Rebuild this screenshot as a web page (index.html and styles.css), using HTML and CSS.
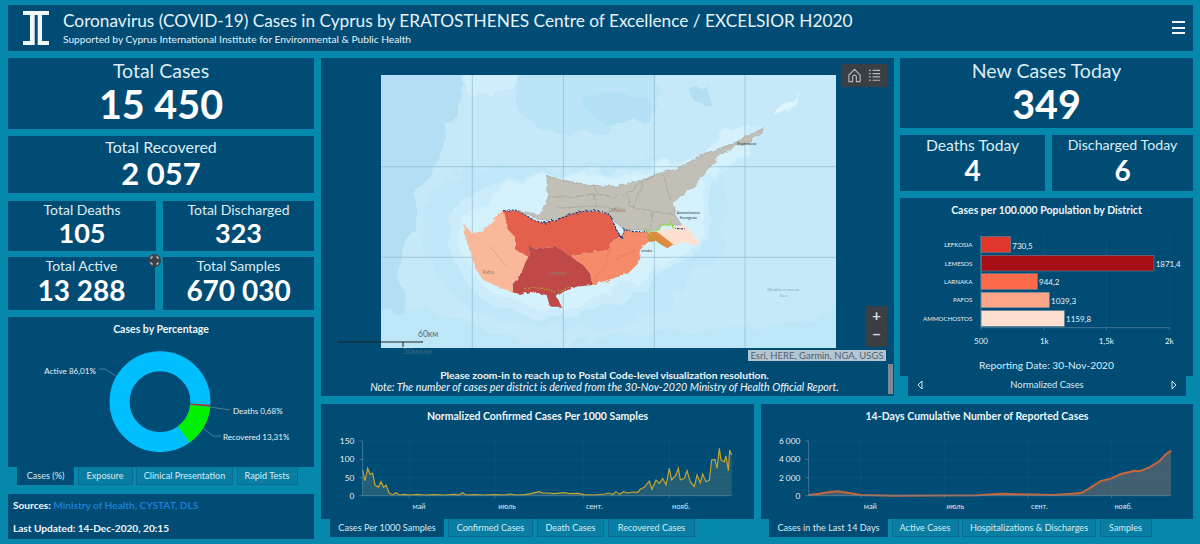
FILE: index.html
```html
<!DOCTYPE html>
<html lang="en">
<head>
<meta charset="utf-8">
<title>COVID-19 Cases in Cyprus</title>
<link rel="stylesheet" href="styles.css">
</head>
<body>
<header class="panel header">
  <svg class="logo" viewBox="0 0 26 34"><path d="M0 0H26V4H0ZM7 4H11.700V34H0V30H7ZM14.700 4H19V30H26V34H14.700Z"/></svg>
  <div class="header-text">
    <h1>Coronavirus (COVID-19) Cases in Cyprus by ERATOSTHENES Centre of Excellence / EXCELSIOR H2020</h1>
    <p>Supported by Cyprus International Institute for Environmental &amp; Public Health</p>
  </div>
  <div class="burger"><i></i><i></i><i></i></div>
</header>
<main class="main">
  <section class="col-left">
    <div class="panel tile tile-total"><span class="lbl lbl-xl">Total Cases</span><b class="num num-xl">15 450</b></div>
    <div class="panel tile tile-rec"><span class="lbl lbl-l">Total Recovered</span><b class="num num-l">2 057</b></div>
    <div class="pair pair-a">
      <div class="panel tile t-a"><span class="lbl lbl-m">Total Deaths</span><b class="num num-m">105</b></div>
      <div class="panel tile t-b"><span class="lbl lbl-m">Total Discharged</span><b class="num num-m">323</b></div>
    </div>
    <div class="pair pair-b">
      <div class="panel tile t-c"><span class="lbl lbl-m">Total Active</span><b class="num num-m2">13 288</b></div>
      <div class="panel tile t-b"><span class="lbl lbl-m">Total Samples</span><b class="num num-m2">670 030</b></div>
      <svg class="expand" viewBox="0 0 13 13"><circle cx="6.500" cy="6.500" r="6.500" fill="#3b4047"/><path d="M3 5V3H5M8 3H10V5M10 8V10H8M5 10H3V8" fill="none" stroke="#d5d8da" stroke-width="1"/></svg>
    </div>
    <div class="panel pie-panel">
      <h2 class="chart-title">Cases by Percentage</h2>
      <svg class="pie" viewBox="0 24 306 126">
        <circle class="ring ring-active" cx="152" cy="84.700" r="40.400"/>
        <circle class="ring ring-rec" cx="152" cy="84.700" r="40.400" pathLength="100" stroke-dasharray="13.310 86.690" transform="rotate(6 152 84.700)"/>
        <circle class="ring ring-death" cx="152" cy="84.700" r="40.400" pathLength="100" stroke-dasharray="0.680 99.320" transform="rotate(3.500 152 84.700)"/>
        <path class="leader" d="M91 52H97L108 59M202 90L222 93M195 111L205 119H213"/>
        <text class="pie-lbl" x="88" y="57" text-anchor="end">Active 86,01%</text>
        <text class="pie-lbl" x="225" y="97">Deaths 0,68%</text>
        <text class="pie-lbl" x="215" y="123">Recovered 13,31%</text>
      </svg>
    </div>
    <nav class="tabs tabs-pie">
      <span class="tab on">Cases (%)</span><span class="tab">Exposure</span><span class="tab">Clinical Presentation</span><span class="tab">Rapid Tests</span>
    </nav>
    <div class="panel sources">
      <p>Sources: <a>Ministry of Health, CYSTAT, DLS</a></p>
      <p>Last Updated: 14-Dec-2020, 20:15</p>
    </div>
  </section>
  <section class="col-rest">
    <div class="top-row">
      <div class="panel map-panel">
        <div class="map-frame">
          <svg class="map" viewBox="3 45 1365 819">
            <defs>
              <filter id="soft" x="-10%" y="-10%" width="120%" height="120%">
                <feTurbulence type="fractalNoise" baseFrequency="0.012" numOctaves="3" seed="7" result="n"/>
                <feDisplacementMap in="SourceGraphic" in2="n" scale="70" result="d"/>
                <feGaussianBlur in="d" stdDeviation="2"/>
              </filter>
              <filter id="rough" x="-5%" y="-5%" width="110%" height="110%">
                <feTurbulence type="fractalNoise" baseFrequency="0.05" numOctaves="4" seed="3" result="n"/>
                <feDisplacementMap in="SourceGraphic" in2="n" scale="13"/>
              </filter>
            </defs>
            <rect x="3" y="45" width="1365" height="819" fill="#c6e9f9"/>
            <g filter="url(#soft)">
              <path fill="#b2dff4" d="M-60 -20H245C260 110 220 210 180 300C120 330 80 420 110 520C50 580 50 650 80 740L-60 900Z"/>
              <path fill="#d0eefb" d="M240 0H430C410 80 340 115 265 105Z"/>
              <path fill="#bbe4f6" d="M410 0H820C860 90 840 170 730 190C640 230 490 220 430 170C390 120 400 80 410 0Z"/>
              <path fill="#b2e0f5" d="M610 110H800C820 150 790 190 720 195C680 200 620 170 610 110Z"/>
              <path fill="#bde6f7" d="M-60 930V770C120 710 240 790 400 840C600 860 900 800 1180 790L1440 740V930Z"/>
              <path fill="#bfe7f8" d="M185 350C280 310 430 310 540 335C700 325 900 265 1010 305C1055 360 1040 480 1010 595C950 650 880 680 860 750C800 815 500 835 335 780C235 750 135 640 135 525C135 430 135 385 185 350Z"/>
              <path fill="#cbecfb" d="M200 450C255 400 380 380 470 345C560 335 700 340 800 325C900 295 1000 245 1080 220C1160 185 1180 205 1120 255C1040 305 1000 355 985 405C975 450 1000 540 975 590C910 610 840 610 815 650C765 710 640 715 585 785C500 805 420 750 335 730C250 695 190 560 200 450Z"/>
              <path fill="#d5f1fc" d="M238 480C290 425 390 395 480 350C560 345 700 350 800 335C900 305 1000 250 1090 220C1130 200 1140 215 1100 255C1030 300 990 345 960 400C950 450 985 530 960 575C900 585 835 590 805 625C760 680 640 690 570 755C500 770 430 715 345 700C275 670 225 560 238 480Z"/>
              <path fill="#e2f5fd" d="M1190 140L1272 110L1232 150L1190 168Z"/>
              <path fill="#b4dff3" d="M930 90L985 78L978 115L940 120Z"/>
            </g>
            <g class="grat"><path d="M277 45V864M550 45V864M823 45V864M1095 45V864M3 320H1368M3 592H1368"/></g>
            <g filter="url(#rough)">
              <path class="land-n" d="M500 345L520 355L600 370L660 378L720 378L790 360L830 342L880 330L930 305L960 285L1010 268L1060 250L1110 225L1152 203L1143 222L1105 245L1060 262L1020 285L990 320L960 350L945 380L905 403L880 430L885 465L906 497L870 492L800 512L730 506L700 482L660 455L600 455L540 475L490 482L440 462L418 452L480 465L505 410Z"/>
              <path class="roads" d="M505 410L580 412L640 402L700 412L745 400L790 365L830 345M640 402L650 440M745 400L750 440L830 455L880 465M820 455L812 505M530 445L640 438L720 445M790 365L760 440M640 375L650 400M850 345L870 420"/>
              <path class="d-pafos" d="M372 455L395 447L405 530L405 570L445 590L435 610L420 650L398 680L395 695L350 680L310 660L285 625L270 570L252 520L250 490L275 520L300 515L335 490L350 462Z"/>
              <path class="d-lef" d="M372 455L395 447L420 455L460 480L490 490L540 475L600 455L660 455L690 465L710 510L725 535L700 540L690 565L640 575L575 590L530 560L490 565L445 560L445 590L405 570L405 530L385 510Z"/>
              <path class="d-lem" d="M445 560L490 565L530 560L575 590L610 615L635 645L637 675L590 680L550 695L530 710L545 740L510 740L500 705L450 695L420 705L395 695L398 680L420 650L435 610L445 590Z"/>
              <path class="d-lar" d="M575 590L640 575L690 565L700 540L725 535L730 505L760 515L800 515L805 545L780 570L775 610L745 640L700 655L637 675L635 645L610 615Z"/>
              <path class="d-amm" d="M825 515L870 505L905 495L920 500L945 530L955 557L900 545L878 555L850 535Z"/>
              <path class="d-strip" d="M800 515L830 515L880 553L862 565L830 545L805 545Z"/>
              <path class="roads-red" d="M690 470L695 540M690 565L680 610L640 665M700 600L770 570M330 560L380 620M470 500L520 540M580 480L600 540"/>
              <path class="green" d="M800 505L812 525M810 515L860 495L872 485L878 505"/>
              <path class="bound-g" d="M435 690L470 680L510 690L530 700L570 680M800 530L860 555"/>
              <path class="bound" d="M372 455L395 447L420 455L460 480L490 490L540 475L600 455L660 452L690 465L710 510L725 535L730 505L760 515L800 515"/>
              <path class="bound" d="M880 505L915 507"/>
            </g>
            <text class="place" x="925" y="463" text-anchor="middle">Ammochostos</text>
            <text class="place" x="925" y="476" text-anchor="middle">Famagusta</text>
            <text class="place" x="1100" y="254" text-anchor="middle">Rizokarpaso</text>
            <text class="place" x="800" y="575" text-anchor="middle">arnaka</text>
            <text class="place dim" x="712" y="455" text-anchor="middle">Lefkosia</text>
            <text class="place dim" x="533" y="645" text-anchor="middle">Lemesos</text>
            <text class="place dim" x="325" y="642" text-anchor="middle">Pafos</text>
            <text class="sea" x="1210" y="693" text-anchor="middle">Mediterranean</text>
            <text class="sea" x="1210" y="712" text-anchor="middle">Sea</text>
          </svg>
        </div>
        <div class="map-tools">
          <svg viewBox="0 0 16 16" class="tool"><path d="M8 1.500L14 7.500V14.500H10V9.500C10 7 6 7 6 9.500V14.500H2V7.500Z"/></svg>
          <svg viewBox="0 0 16 16" class="tool"><path d="M2 2.500H4M6 2.500H14M2 6H4M6 6H14M2 9.500H4M6 9.500H14M2 13H4M6 13H14"/></svg>
        </div>
        <div class="zoom-btns"><span>+</span><span>−</span></div>
        <div class="scale">
          <span class="scale-km">60км</span>
          <svg class="scale-bar" viewBox="0 0 85 7"><path d="M0 1H85V0M65 1V6" fill="none" stroke="#222" stroke-width="1"/></svg>
          <span class="scale-mi">30мили</span>
        </div>
        <div class="attrib">Esri, HERE, Garmin, NGA, USGS</div>
        <div class="caption">
          <p class="cap-b">Please zoom-in to reach up to Postal Code-level visualization resolution.</p>
          <p class="cap-i">Note: The number of cases per district is derived from the 30-Nov-2020 Ministry of Health Official Report.</p>
        </div>
        <div class="scrollbar"></div>
      </div>
      <div class="col-right">
        <div class="panel tile tile-new"><span class="lbl lbl-xl">New Cases Today</span><b class="num num-xl">349</b></div>
        <div class="pair pair-c">
          <div class="panel tile t-d"><span class="lbl lbl-l3">Deaths Today</span><b class="num num-m2">4</b></div>
          <div class="panel tile t-e"><span class="lbl lbl-l2">Discharged Today</span><b class="num num-m2">6</b></div>
        </div>
        <div class="panel bar-panel">
          <h2 class="chart-title">Cases per 100.000 Population by District</h2>
          <svg class="bars" viewBox="0 81 879 390">
            <path class="grid-dot" d="M433 120V398M619 120V398M808 120V398"/>
            <rect x="243" y="125" width="89" height="47" fill="#e0362c" class="bar"/>
            <rect x="243" y="181" width="519" height="47" fill="#a50f15" class="bar"/>
            <rect x="243" y="236" width="169" height="47" fill="#fb6a4a" class="bar"/>
            <rect x="243" y="292" width="205" height="46" fill="#fca588" class="bar"/>
            <rect x="243" y="347" width="250" height="47" fill="#fee0d2" class="bar"/>
            <path class="axis" d="M243 122V405M243 398H808M433 398V405M619 398V405M808 398V405"/>
            <g class="bar-cat">
              <text x="217" y="157" text-anchor="end">LEFKOSIA</text>
              <text x="217" y="212" text-anchor="end">LEMESOS</text>
              <text x="217" y="267" text-anchor="end">LARNAKA</text>
              <text x="217" y="322" text-anchor="end">PAFOS</text>
              <text x="217" y="378" text-anchor="end">AMMOCHOSTOS</text>
            </g>
            <g class="bar-val">
              <text x="337" y="161">730,5</text>
              <text x="767" y="215">1871,4</text>
              <text x="417" y="270">944,2</text>
              <text x="453" y="327">1039,3</text>
              <text x="498" y="382">1159,8</text>
            </g>
            <g class="bar-val">
              <text x="243" y="448" text-anchor="middle">500</text>
              <text x="433" y="448" text-anchor="middle">1k</text>
              <text x="619" y="448" text-anchor="middle">1,5k</text>
              <text x="808" y="448" text-anchor="middle">2k</text>
            </g>
          </svg>
          <div class="report-date">Reporting Date: 30-Nov-2020</div>
        </div>
        <div class="selector">
          <svg class="arrow" viewBox="0 0 6 10"><path d="M5 1L1 5L5 9Z"/></svg>
          <span>Normalized Cases</span>
          <svg class="arrow" viewBox="0 0 6 10"><path d="M1 1L5 5L1 9Z"/></svg>
        </div>
      </div>
    </div>
    <div class="bottom-row">
      <div class="chart-block block-a">
        <div class="panel line-panel">
          <h2 class="chart-title">Normalized Confirmed Cases Per 1000 Samples</h2>
          <svg class="line" viewBox="0 84 1299 273">
            <path class="grid-dot" d="M125 123H1232M125 178H1232M125 233H1232M265 123V287M522 123V287M787 123V287M1045 123V287"/>
            <path class="area-a" d="M125 287V210L132 243L140 205L147 222L155 220L162 255L172 262L180 245L188 262L195 255L205 280L215 284L225 278L235 285L300 284L400 285L425 279L435 285L520 285L570 283L600 285L640 280L655 276L670 279L730 281L760 281L800 285L860 281L880 277L890 283L905 276L930 278L950 275L965 265L985 245L995 268L1005 240L1015 250L1025 235L1035 255L1045 205L1052 240L1065 225L1072 205L1078 240L1090 235L1098 212L1108 245L1120 260L1128 225L1138 248L1145 222L1155 245L1165 240L1172 180L1182 178L1188 205L1195 145L1200 180L1210 185L1215 168L1222 212L1226 150L1232 165V287Z"/>
            <polyline class="line-a" points="125,210 132,243 140,205 147,222 155,220 162,255 172,262 180,245 188,262 195,255 205,280 215,284 225,278 235,285 250,283 270,285 290,283 310,285 340,284 370,285 400,283 415,285 425,278 435,285 460,284 490,285 520,284 550,285 570,282 585,285 610,284 630,281 645,277 655,275 665,279 680,279 700,281 730,278 745,281 770,280 790,284 820,285 850,282 865,279 875,284 885,275 895,283 908,275 920,279 935,276 950,277 958,268 970,262 985,243 993,268 1005,240 1015,250 1025,235 1035,255 1045,205 1052,240 1065,225 1072,205 1078,240 1090,235 1098,212 1108,245 1120,260 1128,225 1138,248 1145,222 1155,245 1165,240 1172,180 1182,178 1188,205 1195,145 1200,180 1210,185 1215,168 1222,212 1226,150 1232,165"/>
            <path class="axis" d="M125 123V287H1232M115 123H125M115 178H125M115 233H125M115 287H125M265 287V294M522 287V294M787 287V294M1045 287V294"/>
            <g class="tick">
              <text x="100" y="132" text-anchor="end">150</text>
              <text x="100" y="187" text-anchor="end">100</text>
              <text x="100" y="242" text-anchor="end">50</text>
              <text x="100" y="296" text-anchor="end">0</text>
            </g>
            <g class="tick tick-m">
              <text x="294" y="326" text-anchor="middle">май</text>
              <text x="558" y="326" text-anchor="middle">июль</text>
              <text x="820" y="326" text-anchor="middle">сент.</text>
              <text x="1080" y="326" text-anchor="middle">нояб.</text>
            </g>
          </svg>
        </div>
        <nav class="tabs tabs-a">
          <span class="tab on">Cases Per 1000 Samples</span><span class="tab">Confirmed Cases</span><span class="tab">Death Cases</span><span class="tab">Recovered Cases</span>
        </nav>
      </div>
      <div class="chart-block block-b">
        <div class="panel line-panel">
          <h2 class="chart-title">14-Days Cumulative Number of Reported Cases</h2>
          <svg class="line" viewBox="0 84 1296 273">
            <path class="grid-dot" d="M143 123H1230M143 178H1230M143 233H1230M300 123V287M550 123V287M802 123V287M1052 123V287"/>
            <path class="area-b" d="M143 287V285L175 281L200 277L230 274L260 278L300 285L400 287L650 286L720 281L780 283L880 285L960 279L985 265L1020 243L1050 236L1080 222L1105 216L1135 214L1165 202L1195 184L1212 165L1230 152V287Z"/>
            <polyline class="line-b" points="143,285 175,281 200,277 230,274 260,278 300,285 400,287 650,286 720,281 780,283 880,285 960,279 985,265 1020,243 1050,236 1080,222 1105,216 1120,212 1135,214 1165,202 1195,184 1212,165 1230,152"/>
            <path class="axis" d="M143 123V287H1230M133 123H143M133 178H143M133 233H143M133 287H143M300 287V294M550 287V294M802 287V294M1052 287V294"/>
            <g class="tick">
              <text x="118" y="132" text-anchor="end">6 000</text>
              <text x="118" y="187" text-anchor="end">4 000</text>
              <text x="118" y="242" text-anchor="end">2 000</text>
              <text x="118" y="296" text-anchor="end">0</text>
            </g>
            <g class="tick tick-m">
              <text x="328" y="326" text-anchor="middle">май</text>
              <text x="583" y="326" text-anchor="middle">июль</text>
              <text x="835" y="326" text-anchor="middle">сент.</text>
              <text x="1087" y="326" text-anchor="middle">нояб.</text>
            </g>
          </svg>
        </div>
        <nav class="tabs tabs-b">
          <span class="tab on">Cases in the Last 14 Days</span><span class="tab">Active Cases</span><span class="tab">Hospitalizations &amp; Discharges</span><span class="tab">Samples</span>
        </nav>
      </div>
    </div>
  </section>
</main>
</body>
</html>
```
FILE: styles.css
```css
* { box-sizing: border-box; }
html, body { margin: 0; height: 100%; }
body {
  background: #0688ad;
  color: #e6f3f7;
  font-family: Lato, "Noto Sans", sans-serif;
  padding: 5px 7px 0 8px;
  overflow: hidden;
}
h1, h2, p { margin: 0; font-weight: normal; }
.panel { background: #014c75; }

.header { height: 46px; display: flex; align-items: center; position: relative; padding-left: 15px; }
.logo { width: 26px; height: 34px; fill: #f2f7f9; margin-right: 14px; }
.header-text { display: flex; flex-direction: column; margin-top: -1px; }
.header-text h1 { font-size: 17.250px; line-height: 24px; white-space: nowrap; }
.header-text p { font-size: 10.200px; line-height: 13px; }
.burger { position: absolute; right: 8px; top: 16px; width: 13px; display: flex; flex-direction: column; gap: 3.500px; }
.burger i { display: block; height: 2px; background: #eef6f8; }

.main { display: flex; margin-top: 7px; }
.col-left { width: 306px; display: flex; flex-direction: column; position: relative; }
.col-rest { width: 872px; margin-left: 7px; display: flex; flex-direction: column; }
.top-row { display: flex; height: 338px; }
.bottom-row { display: flex; margin-top: 8px; justify-content: space-between; }

.tile { display: flex; flex-direction: column; align-items: center; text-align: center; white-space: nowrap; }
.lbl { display: block; color: #dcedf3; }
.lbl-xl { font-size: 19.500px; line-height: 26px; }
.lbl-l { font-size: 16px; line-height: 20px; }
.lbl-l2 { font-size: 14.200px; line-height: 20px; }
.lbl-l3 { font-size: 15.700px; line-height: 20px; }
.lbl-m { font-size: 14px; line-height: 18px; }
.num { display: block; color: #fff; font-weight: 700; }
.num-xl { font-size: 39.500px; line-height: 40px; }
.num-l { font-size: 31px; line-height: 32px; }
.num-m { font-size: 27px; line-height: 28px; }
.num-m2 { font-size: 28px; line-height: 30px; }

.tile-total { height: 71px; }
.tile-rec { height: 57px; margin-top: 7px; padding-top: 1px; }
.pair { display: flex; justify-content: space-between; position: relative; }
.pair-a { height: 50px; margin-top: 8px; }
.pair-b { height: 53px; margin-top: 6px; }
.t-a { width: 148px; }
.t-b { width: 151px; }
.t-c { width: 147px; }
.expand { position: absolute; left: 140px; top: -3px; width: 13px; height: 13px; }

.pie-panel { height: 150px; margin-top: 7px; }
.chart-title { font-size: 10.500px; font-weight: 700; line-height: 24px; height: 24px; text-align: center; color: #eef6f8; white-space: nowrap; }
.pie { display: block; width: 306px; height: 126px; }
.ring { fill: none; stroke-width: 20px; }
.ring-active { stroke: #00bfff; }
.ring-rec { stroke: #00f000; }
.ring-death { stroke: #a33a34; }
.leader { fill: none; stroke: #7f9db0; stroke-width: .6px; }
.pie-lbl { font-size: 8.100px; fill: #e6f1f5; }

.tabs { display: flex; height: 19px; }
.tab {
  font-size: 9.100px;
  line-height: 17px;
  height: 18px;
  background: #0a7da3;
  border: 1px solid #0b6a95;
  border-top: 0;
  color: #d7ebf2;
  white-space: nowrap;
  text-align: center;
}
.tab.on { background: #014c75; border-color: #014c75; }
.tabs-pie { padding-left: 9px; gap: 3.500px; }
.tabs-pie .tab:nth-child(1) { width: 57px; }
.tabs-pie .tab:nth-child(2) { width: 55px; }
.tabs-pie .tab:nth-child(3) { width: 97px; }
.tabs-pie .tab:nth-child(4) { width: 61px; }
.tabs-a { padding-left: 9px; gap: 4px; }
.tabs-a .tab:nth-child(1) { width: 114px; }
.tabs-a .tab:nth-child(2) { width: 85px; }
.tabs-a .tab:nth-child(3) { width: 67px; }
.tabs-a .tab:nth-child(4) { width: 87px; }
.tabs-b { padding-left: 8px; gap: 3.500px; }
.tabs-b .tab:nth-child(1) { width: 119px; }
.tabs-b .tab:nth-child(2) { width: 67px; }
.tabs-b .tab:nth-child(3) { width: 134px; }
.tabs-b .tab:nth-child(4) { width: 52px; }

.sources { height: 45px; margin-top: 8px; padding: 0 5px; font-size: 10.100px; line-height: 23px; color: #f2f7f9; }
.sources p { font-weight: 700; }
.sources a { color: #1f7fd0; }

.map-panel { width: 573px; position: relative; }
.map-frame { margin: 17px 0 0 60px; width: 455px; height: 273px; }
.map { display: block; width: 455px; height: 273px; }
.grat path { fill: none; stroke: #8db8cf; stroke-width: 2px; }
.land-n { fill: #c1bfb6; stroke: #9a9a90; stroke-width: 1.500px; }
.roads { fill: none; stroke: #97968c; stroke-width: 1.500px; }
.d-pafos { fill: #f9b899; }
.d-lef { fill: #e4604e; }
.d-lem { fill: #bf4a47; }
.d-lar { fill: #f58b68; }
.d-amm { fill: #fde0cf; }
.d-strip { fill: #e0893f; }
.roads-red { fill: none; stroke: #c96a54; stroke-width: 1.500px; opacity: .7; }
.green { fill: none; stroke: #8fdc3c; stroke-width: 4px; }
.bound-g { fill: none; stroke: #b5a03a; stroke-width: 3px; stroke-dasharray: 6 3; }
.bound { fill: none; stroke: #1f3a80; stroke-width: 3.500px; stroke-dasharray: 7 4; }
.place { font-size: 11px; fill: #2c3a44; }
.place.dim { fill: #9a7d72; font-size: 14px; }
.sea { font-size: 13px; fill: #7fa3b8; letter-spacing: 1px; }

.map-tools { position: absolute; left: 520px; top: 6px; width: 46px; height: 23px; background: #3a3f45; display: flex; align-items: center; justify-content: space-around; padding: 0 3px; }
.tool { width: 15px; height: 15px; fill: none; stroke: #b4b9bc; stroke-width: 1.200; }
.zoom-btns { position: absolute; left: 545px; top: 248px; width: 21px; height: 41px; background: #3a3f45; display: flex; flex-direction: column; align-items: center; color: #d8dbdd; font-size: 15.500px; font-weight: 700; line-height: 19px; }
.scale { position: absolute; left: 17px; top: 271px; width: 100px; height: 30px; }
.scale-km { position: absolute; left: 80px; top: 0; font-size: 8.500px; line-height: 11px; color: #53717f; }
.scale-bar { position: absolute; left: 0; top: 12px; width: 85px; height: 7px; }
.scale-mi { position: absolute; left: 65px; top: 17px; font-size: 8px; line-height: 11px; color: #3f6a83; }
.attrib { position: absolute; left: 427px; top: 292px; width: 138px; height: 11px; background: #b3c6d3; color: #55626c; font-size: 9.500px; line-height: 11px; text-align: center; white-space: nowrap; }
.caption { text-align: center; padding: 22px 6px 0 0; font-size: 10.700px; line-height: 11px; color: #f2f7f9; white-space: nowrap; }
.cap-b { font-weight: 700; font-size: 10.300px; }
.cap-i { font-style: italic; }
.scrollbar { position: absolute; left: 567px; top: 306px; width: 5px; height: 30px; background: #7e8a92; }

.col-right { width: 293px; margin-left: 6px; display: flex; flex-direction: column; }
.tile-new { height: 70px; }
.pair-c { height: 56px; margin-top: 7px; }
.t-d { width: 145px; }
.t-e { width: 141px; }
.bar-panel { height: 178px; margin-top: 7px; }
.bars { display: block; width: 293px; height: 130px; }
.grid-dot { fill: none; stroke: #2a6f93; stroke-width: 1.500px; stroke-dasharray: 3 5; }
.bar { stroke: #6f93a8; stroke-width: 1.500px; }
.axis { fill: none; stroke: #5d8ba6; stroke-width: 2px; }
.bar-cat { font-size: 18.500px; fill: #e6f0f4; }
.bar-val { font-size: 24px; fill: #eaf3f6; }
.report-date { font-size: 10.200px; line-height: 26px; text-align: center; color: #dcedf3; }
.selector { height: 20px; margin: 0 7px 0 8px; padding: 0 9px 3px; background: #014c75; display: flex; align-items: center; justify-content: space-between; font-size: 9.400px; color: #d7ebf2; }
.arrow { width: 6px; height: 10px; fill: none; stroke: #d7ebf2; stroke-width: 1; }

.chart-block { display: flex; flex-direction: column; }
.block-a { width: 433px; }
.block-b { width: 432px; }
.line-panel { height: 115px; }
.line { display: block; width: 100%; height: 91px; }
.tick { font-size: 25px; fill: #e3eff4; }
.tick-m { font-size: 22px; fill: #dcebf1; }
.area-a { fill: rgba(170, 170, 120, .2); }
.line-a { fill: none; stroke: #c9a52e; stroke-width: 3.500px; }
.area-b { fill: rgba(170, 125, 105, .38); }
.line-b { fill: none; stroke: #c8653a; stroke-width: 6px; }
```
